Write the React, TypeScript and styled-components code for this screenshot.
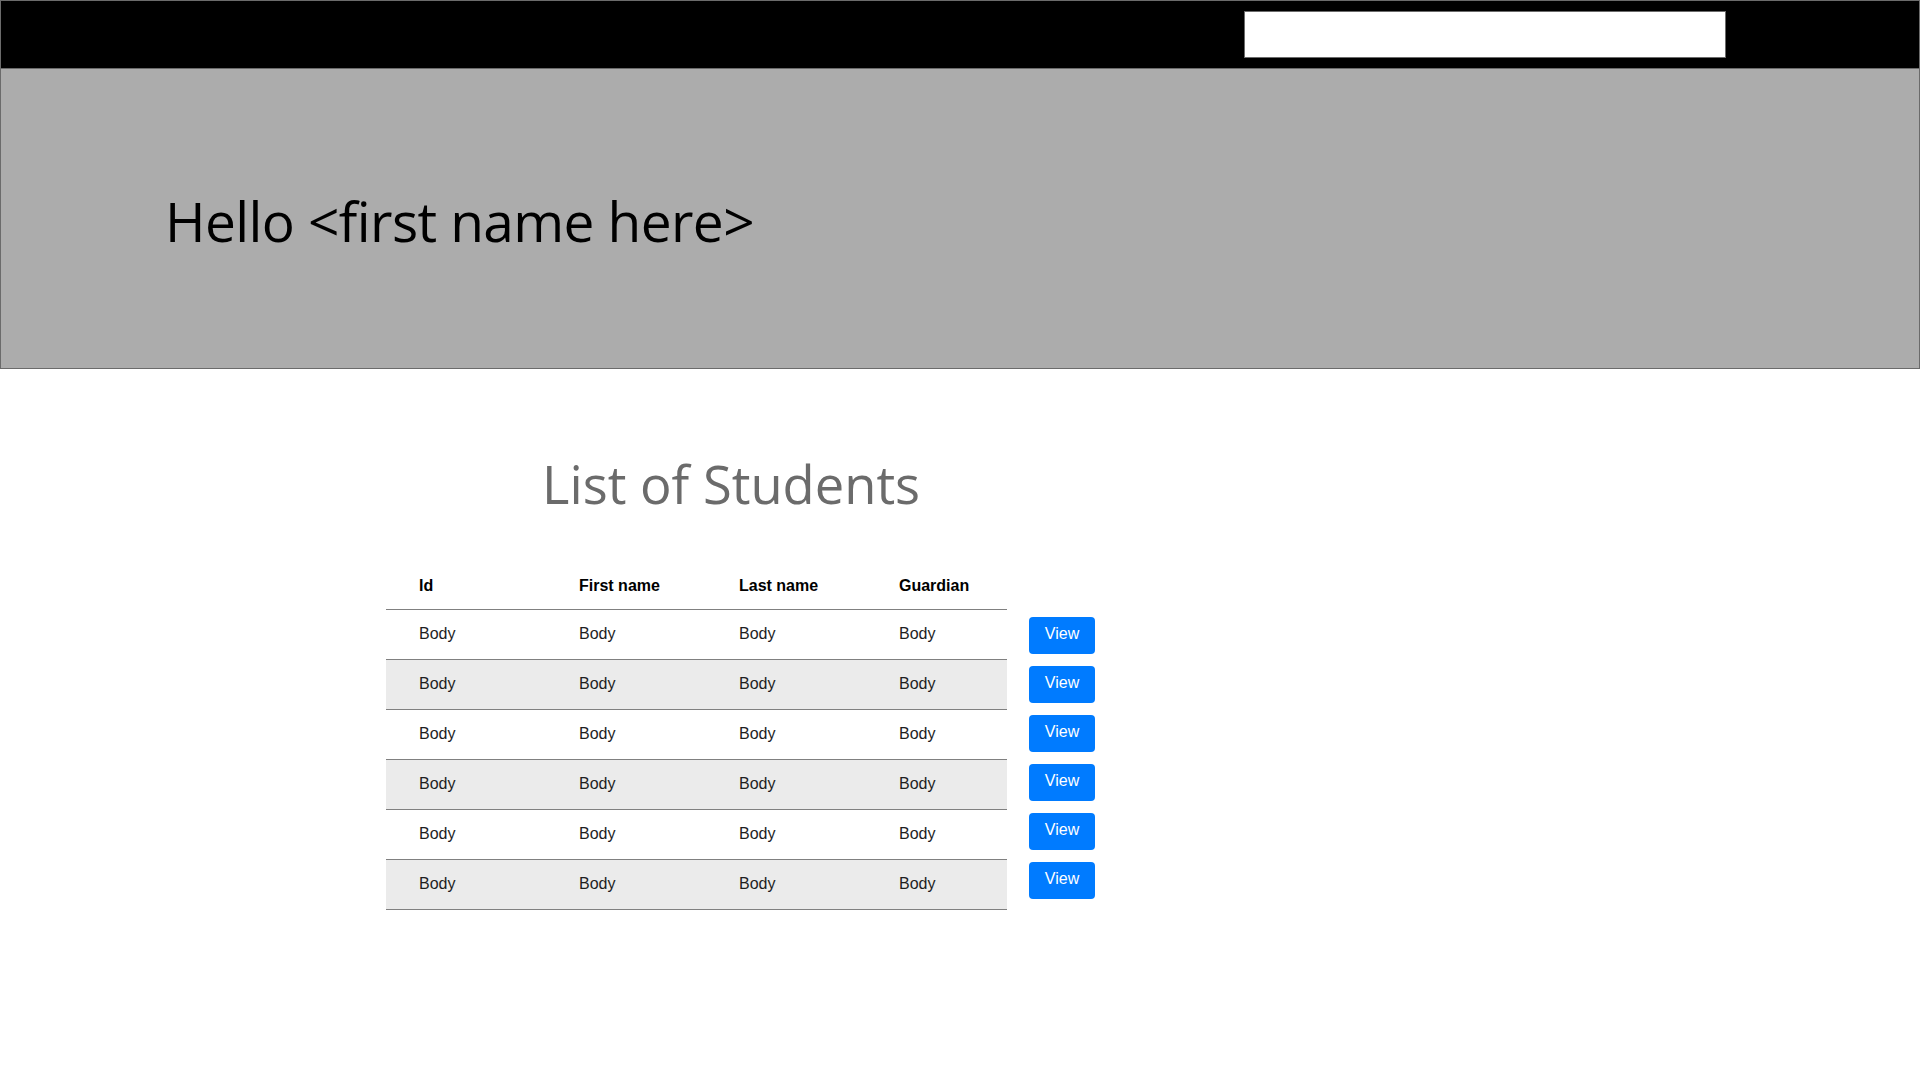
import React from "react";
import styled, { createGlobalStyle } from "styled-components";

const GlobalStyle = createGlobalStyle`
  html, body {
    margin: 0;
    padding: 0;
    background: #ffffff;
  }
  body {
    font-family: "Liberation Sans", Arial, sans-serif;
  }
  * {
    box-sizing: border-box;
  }
`;

const Page = styled.div`
  width: 1920px;
  min-height: 1080px;
  background: #ffffff;
`;

const TopBar = styled.header`
  height: 69px;
  background: #000000;
  border: 1px solid #6b6b6b;
  display: flex;
  align-items: center;
  justify-content: flex-end;
  padding-right: 193px;
`;

const SearchInput = styled.input`
  width: 482px;
  height: 47px;
  background: #ffffff;
  border: 1px solid #6b6b6b;
  border-radius: 0;
  outline: none;
  padding: 0 10px;
  font-family: "Liberation Sans", Arial, sans-serif;
  font-size: 16px;
`;

const Hero = styled.section`
  height: 300px;
  background: #acacac;
  border: 1px solid #6b6b6b;
  border-top: none;
  padding: 124px 0 0 164px;
`;

const Greeting = styled.h1`
  margin: 0;
  font-family: "Open Sans", "Noto Sans", sans-serif;
  font-weight: 400;
  font-size: 55px;
  letter-spacing: -0.6px;
  line-height: 1;
  color: #000000;
`;

const Main = styled.main`
  padding: 89px 0 0 386px;
`;

const Title = styled.h2`
  margin: 0 0 52px 156px;
  font-family: "Open Sans", "Noto Sans", sans-serif;
  font-weight: 400;
  font-size: 52.5px;
  line-height: 1;
  color: #6b6b6b;
`;

const Content = styled.div`
  display: flex;
  align-items: flex-start;
  gap: 22px;
`;

const Table = styled.div`
  width: 621px;
  display: flex;
  flex-direction: column;
`;

const Row = styled.div<{ $head?: boolean; $shade?: boolean }>`
  display: grid;
  grid-template-columns: 160px 160px 160px 1fr;
  align-items: center;
  padding-left: 33px;
  height: ${(p) => (p.$head ? "47px" : "50px")};
  border-bottom: 1px solid #808080;
  background: ${(p) => (p.$shade ? "#ebebeb" : "#ffffff")};
`;

const Cell = styled.div<{ $head?: boolean }>`
  font-family: "Liberation Sans", Arial, sans-serif;
  font-size: 16px;
  font-weight: ${(p) => (p.$head ? 700 : 400)};
  color: ${(p) => (p.$head ? "#000000" : "#1e1e1e")};
`;

const Actions = styled.div`
  display: flex;
  flex-direction: column;
  gap: 12px;
  margin-top: 54px;
`;

const ViewButton = styled.button`
  width: 66px;
  height: 37px;
  border: none;
  border-radius: 4px;
  background: #007bff;
  color: #ffffff;
  font-family: "Liberation Sans", Arial, sans-serif;
  font-size: 16px;
  padding: 0 0 2px;
  cursor: pointer;
`;

const headers = ["Id", "First name", "Last name", "Guardian"];
const rows = Array.from({ length: 6 }, () => ["Body", "Body", "Body", "Body"]);

export default function App() {
  return (
    <>
      <GlobalStyle />
      <Page>
        <TopBar>
          <SearchInput type="text" aria-label="Search" />
        </TopBar>
        <Hero>
          <Greeting>Hello &lt;first name here&gt;</Greeting>
        </Hero>
        <Main>
          <Title>List of Students</Title>
          <Content>
            <Table>
              <Row $head>
                {headers.map((h) => (
                  <Cell key={h} $head>
                    {h}
                  </Cell>
                ))}
              </Row>
              {rows.map((r, i) => (
                <Row key={i} $shade={i % 2 === 1}>
                  {r.map((c, j) => (
                    <Cell key={j}>{c}</Cell>
                  ))}
                </Row>
              ))}
            </Table>
            <Actions>
              {rows.map((_, i) => (
                <ViewButton key={i}>View</ViewButton>
              ))}
            </Actions>
          </Content>
        </Main>
      </Page>
    </>
  );
}
